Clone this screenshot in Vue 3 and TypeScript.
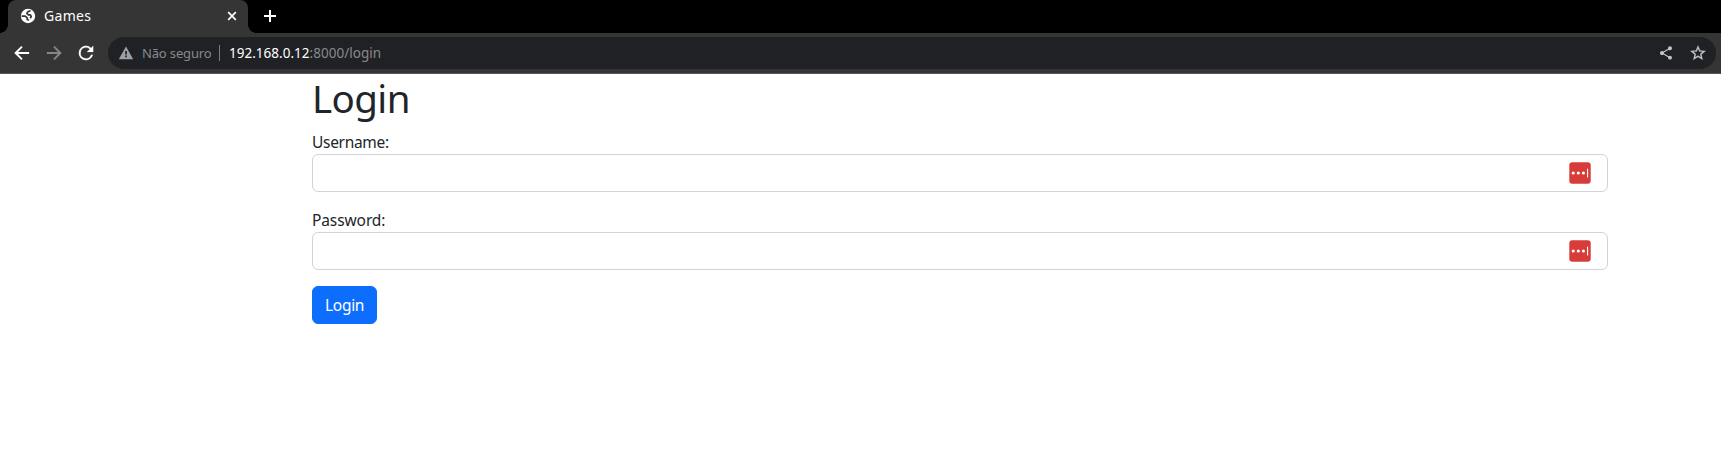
<script setup lang="ts">
import { ref } from 'vue'

interface Field {
  id: string
  label: string
  type: string
}

const fields: Field[] = [
  { id: 'username', label: 'Username:', type: 'text' },
  { id: 'password', label: 'Password:', type: 'password' },
]
const values = ref<Record<string, string>>({ username: '', password: '' })
</script>

<template>
  <div class="browser">
    <div class="tabstrip">
      <div class="tab">
        <svg class="favicon" viewBox="0 0 16 16">
          <circle cx="8" cy="8" r="7.2" fill="#fff" />
          <path d="M10.6 2.8 8 3.6 6.8 5.4l1.6 1.4h2l.8 1.8-1 1.6M1.6 8.2h3.6l2 1.6v1.4l1.6 1.2" fill="none" stroke="#353535" stroke-width="1.7" stroke-linejoin="round" />
        </svg>
        <span class="tab-title">Games</span>
        <svg class="close" viewBox="0 0 10 10"><path d="M1.2 1.2l7.6 7.6M8.8 1.2L1.2 8.8" stroke="#fff" stroke-width="1.7" /></svg>
      </div>
      <svg class="plus" viewBox="0 0 12 12"><path d="M6 0v12M0 6h12" stroke="#fff" stroke-width="2" /></svg>
    </div>
    <div class="toolbar">
      <svg class="nav" viewBox="0 0 24 24"><path d="M21.5 12H4M12 3.5 3.5 12l8.5 8.5" fill="none" stroke="#fff" stroke-width="2.6" /></svg>
      <svg class="nav" viewBox="0 0 24 24"><path d="M2.5 12H20M12 3.5l8.5 8.5-8.5 8.5" fill="none" stroke="#868686" stroke-width="2.6" /></svg>
      <svg class="nav" viewBox="2 2 20 20"><path d="M17.65 6.35A7.96 7.96 0 0 0 12 4a8 8 0 1 0 7.73 10h-2.08A6 6 0 1 1 12 6c1.66 0 3.14.69 4.22 1.78L13 11h7V4l-2.35 2.35z" fill="#fff" stroke="#fff" stroke-width=".2" /></svg>
      <div class="omnibox">
        <svg class="warn" viewBox="0 0 16 14"><path d="M8 .5 15.2 13.2H.8z" fill="#9aa0a6" /><path d="M7.2 5h1.7v3.4H7.2zM7.2 9.6h1.7v1.6H7.2z" fill="#202124" /></svg>
        <span class="insecure">Não seguro</span>
        <span class="divider"></span>
        <span class="url"><b>192.168.0.12</b>:8000/login</span>
        <svg class="share" viewBox="0 0 24 24"><path d="M18 16.08c-.76 0-1.44.3-1.96.77L8.91 12.7c.05-.23.09-.46.09-.7s-.04-.47-.09-.7l7.05-4.11c.54.5 1.25.81 2.04.81a3 3 0 1 0-3-3c0 .24.04.47.09.7L8.04 9.81A3 3 0 1 0 6 15c.79 0 1.5-.31 2.04-.81l7.12 4.16c-.05.21-.08.43-.08.65A2.92 2.92 0 1 0 18 16.08z" fill="#c4c5c7" /></svg>
        <svg class="star" viewBox="1.5 1.5 21 21"><path d="M22 9.24l-7.19-.62L12 2 9.19 8.63 2 9.24l5.46 4.73L5.82 21 12 17.27 18.18 21l-1.63-7.03L22 9.24zM12 15.4l-3.76 2.27 1-4.28-3.32-2.88 4.38-.38L12 6.1l1.71 4.04 4.38.38-3.32 2.88 1 4.28L12 15.4z" fill="#c4c5c7" stroke="#c4c5c7" stroke-width=".3" /></svg>
      </div>
    </div>

    <main class="page">
      <h1>Login</h1>
      <form @submit.prevent>
        <div v-for="field in fields" :key="field.id" class="field">
          <label :for="field.id" :class="field.id">{{ field.label }}</label>
          <div class="control">
            <input :id="field.id" v-model="values[field.id]" :type="field.type" />
            <svg class="manager" viewBox="0 0 22 22">
              <rect x=".3" y=".3" width="21.4" height="21.4" rx="3" fill="#d73c38" />
              <circle cx="4.2" cy="11" r="1.6" fill="#fff" />
              <circle cx="9.3" cy="11" r="1.6" fill="#fff" />
              <circle cx="14.4" cy="11" r="1.6" fill="#fff" />
              <rect x="18" y="6.6" width="1.1" height="8.8" rx=".5" fill="#fff" />
            </svg>
          </div>
        </div>
        <button type="submit">Login</button>
      </form>
    </main>
  </div>
</template>

<style>
body {
  margin: 0;
  background: #fff;
}
</style>

<style scoped>
.browser {
  height: 471px;
  overflow: hidden;
  background: #fff;
  font-family: "Noto Sans", sans-serif;
}
svg {
  display: block;
  flex: none;
}
.tabstrip {
  display: flex;
  align-items: flex-start;
  height: 33px;
  padding-left: 8px;
  background: #000;
}
.tab {
  position: relative;
  display: flex;
  align-items: center;
  box-sizing: border-box;
  width: 240px;
  height: 33px;
  padding: 0 11px 1px 12px;
  border-radius: 8px 8px 0 0;
  background: #353535;
}
.tab::before,
.tab::after {
  content: "";
  position: absolute;
  bottom: 0;
  width: 8px;
  height: 8px;
}
.tab::before {
  left: -8px;
  background: radial-gradient(circle at 0 0, transparent 7.5px, #353535 8px);
}
.tab::after {
  right: -8px;
  background: radial-gradient(circle at 100% 0, transparent 7.5px, #353535 8px);
}
.favicon {
  width: 16px;
  height: 16px;
}
.tab-title {
  flex: 1;
  margin-left: 8px;
  color: #fff;
  font-size: 14px;
  line-height: 20px;
  letter-spacing: 0.3px;
}
.close {
  width: 10px;
  height: 10px;
}
.plus {
  width: 12px;
  height: 12px;
  margin: 10px 0 0 16px;
}
.toolbar {
  display: flex;
  align-items: center;
  box-sizing: border-box;
  height: 41px;
  padding: 0 5px 0 13px;
  border-bottom: 1px solid #565656;
  background: #353535;
}
.nav {
  width: 18px;
  height: 18px;
  margin-right: 14px;
}
.omnibox {
  display: flex;
  flex: 1;
  align-items: center;
  box-sizing: border-box;
  height: 32px;
  padding: 0 10px;
  margin-left: -1px;
  border-radius: 16px;
  background: #202124;
  color: #868a8e;
  font-size: 13.5px;
  line-height: 20px;
  white-space: nowrap;
}
.warn {
  width: 16px;
  height: 14px;
}
.insecure {
  width: 69px;
  margin-left: 8px;
  font-size: 13px;
  letter-spacing: -0.15px;
}
.divider {
  width: 1px;
  height: 16px;
  margin-left: 8px;
  background: #7b7e82;
}
.url {
  flex: 1;
  margin-left: 9px;
  letter-spacing: 0.02px;
}
.url b {
  color: #fff;
  font-weight: 400;
}
.share {
  width: 16px;
  height: 16px;
}
.star {
  width: 16px;
  height: 16px;
  margin-left: 16px;
}
.page {
  width: 1296px;
  margin-left: 312px;
  color: #212529;
  font-size: 16px;
  line-height: 24px;
}
h1 {
  height: 48px;
  margin: 0 0 8px;
  font-size: 38.5px;
  font-weight: 400;
  line-height: 48px;
  letter-spacing: -0.6px;
}
.field {
  margin-bottom: 16px;
}
label {
  display: block;
  height: 24px;
  font-size: 15.5px;
  line-height: 25px;
}
.username {
  letter-spacing: -0.3px;
}
.password {
  letter-spacing: -0.1px;
}
.control {
  position: relative;
}
input {
  display: block;
  box-sizing: border-box;
  width: 100%;
  height: 38px;
  padding: 6px 12px;
  border: 1px solid #ced4da;
  border-radius: 6px;
  background: #fff;
  color: inherit;
  font: inherit;
  outline: 0;
}
.manager {
  position: absolute;
  top: 8px;
  right: 17px;
  width: 22px;
  height: 22px;
}
button {
  display: block;
  box-sizing: border-box;
  width: 65px;
  height: 38px;
  padding: 6px 12px;
  border: 1px solid #0d6efd;
  border-radius: 6px;
  background: #0d6efd;
  color: #fff;
  font: inherit;
  font-size: 15.5px;
  letter-spacing: -0.3px;
}
</style>
